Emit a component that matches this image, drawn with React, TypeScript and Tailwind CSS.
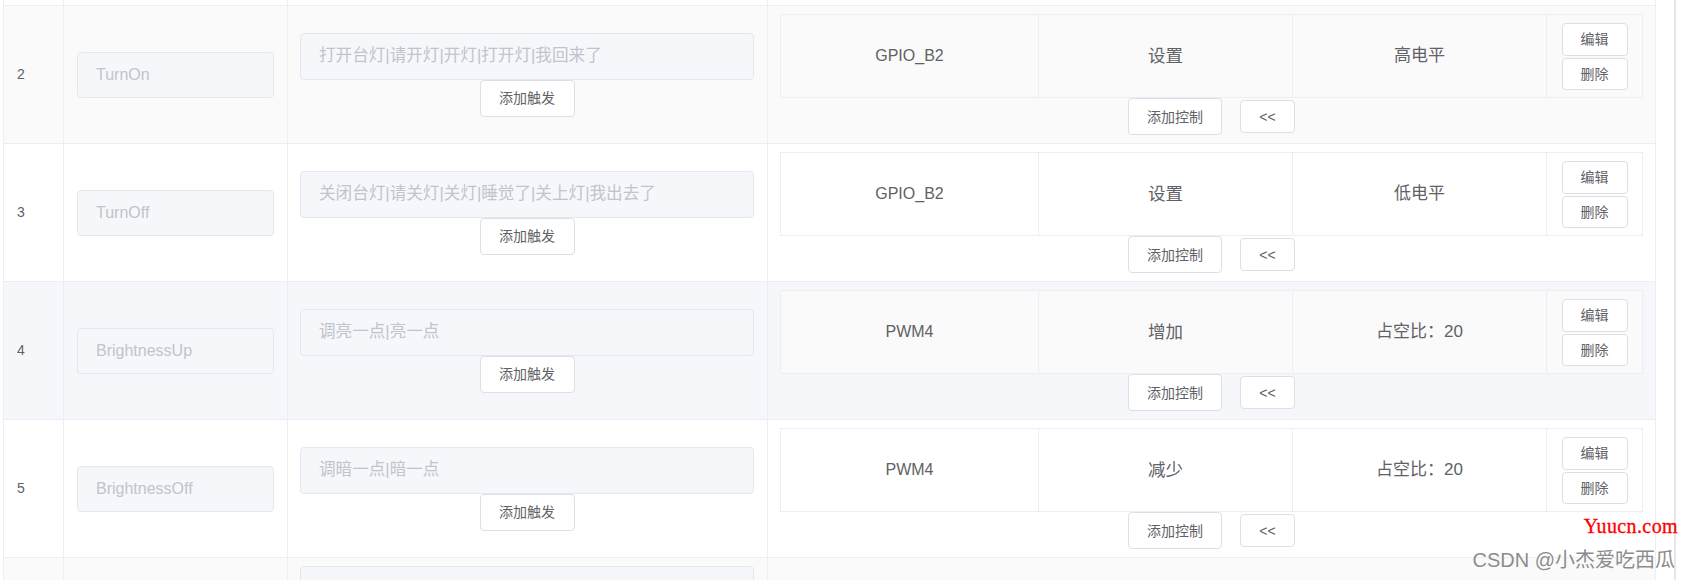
type Row = {
  no: string;
  name: string;
  trigger: string;
  pin: string;
  action: string;
  value: string;
  bg: string;
  inner: string;
};

const rows: Row[] = [
  { no: "2", name: "TurnOn", trigger: "打开台灯|请开灯|开灯|打开灯|我回来了", pin: "GPIO_B2", action: "设置", value: "高电平", bg: "bg-[#fafafa]", inner: "bg-[#fafafa]" },
  { no: "3", name: "TurnOff", trigger: "关闭台灯|请关灯|关灯|睡觉了|关上灯|我出去了", pin: "GPIO_B2", action: "设置", value: "低电平", bg: "bg-white", inner: "bg-white" },
  { no: "4", name: "BrightnessUp", trigger: "调亮一点|亮一点", pin: "PWM4", action: "增加", value: "占空比：20", bg: "bg-[#f5f7fa]", inner: "bg-[#fafafa]" },
  { no: "5", name: "BrightnessOff", trigger: "调暗一点|暗一点", pin: "PWM4", action: "减少", value: "占空比：20", bg: "bg-white", inner: "bg-white" },
];

function Btn({ children, className }: { children: React.ReactNode; className: string }) {
  return (
    <div className={`flex items-center justify-center rounded-[4px] border border-[#dcdfe6] bg-white text-[14px] leading-none text-[#606266] ${className}`}>
      {children}
    </div>
  );
}

function Input({ text, className }: { text: string; className: string }) {
  return (
    <div className={`flex items-center rounded-[4px] border border-[#e4e7ed] bg-[#f5f7fa] pl-[18px] text-[#c0c4cc] whitespace-nowrap overflow-hidden ${className}`}>
      {text}
    </div>
  );
}

function TableRow({ row }: { row: Row }) {
  return (
    <div className={`flex h-[138px] border-b border-[#ebeef5] ${row.bg}`}>
      {/* index */}
      <div className="flex w-[60px] items-center border-r border-[#ebeef5] pl-[13px] text-[14px] text-[#606266]">
        {row.no}
      </div>
      {/* name */}
      <div className="flex w-[224px] items-center border-r border-[#ebeef5] px-[13px]">
        <Input text={row.name} className="h-[46px] w-[197px] text-[16px]" />
      </div>
      {/* triggers */}
      <div className="flex w-[480px] flex-col items-center justify-center border-r border-[#ebeef5] pl-[12px] pr-[13px]">
        <Input text={row.trigger} className="h-[47px] w-full text-[16.6px]" />
        <Btn className="h-[37px] w-[95px]">添加触发</Btn>
      </div>
      {/* controls */}
      <div className="flex w-[888px] flex-col border-r border-[#ebeef5] px-[12px] pt-[8px]">
        <div className={`flex h-[84px] border border-[#ebeef5] text-[#606266] ${row.inner}`}>
          <div className="flex w-[258px] items-center justify-center border-r border-[#ebeef5] text-[16px]">{row.pin}</div>
          <div className="flex w-[254px] items-center justify-center border-r border-[#ebeef5] text-[17.5px]">{row.action}</div>
          <div className="flex w-[254px] items-center justify-center border-r border-[#ebeef5] text-[17px]">{row.value}</div>
          <div className="flex w-[95px] flex-col items-center justify-center gap-[2px]">
            <Btn className="h-[33px] w-[66px]">编辑</Btn>
            <Btn className="h-[32px] w-[66px]">删除</Btn>
          </div>
        </div>
        <div className="flex h-[37px] items-center justify-center gap-[18px]">
          <Btn className="h-[37px] w-[94px]">添加控制</Btn>
          <Btn className="h-[33px] w-[55px]">&lt;&lt;</Btn>
        </div>
      </div>
    </div>
  );
}

export default function App() {
  return (
    <div className="relative h-[580px] w-[1691px] overflow-hidden bg-white font-['Liberation_Sans','Noto_Sans_CJK_SC',sans-serif]">
      <div className="flex h-full">
        <div className="w-[3px]" />
        <div className="w-[1653px] border-l border-[#ebeef5]">
          {/* tail of the previous row */}
          <div className="flex h-[6px] border-b border-[#ebeef5] bg-white">
            <div className="w-[60px] border-r border-[#ebeef5]" />
            <div className="w-[224px] border-r border-[#ebeef5]" />
            <div className="w-[480px] border-r border-[#ebeef5]" />
            <div className="w-[888px] border-r border-[#ebeef5]" />
          </div>
          {rows.map((r) => (
            <TableRow key={r.no} row={r} />
          ))}
          {/* next row, cut off */}
          <div className="flex h-[200px] bg-[#fafafa]">
            <div className="w-[60px] border-r border-[#ebeef5]" />
            <div className="w-[224px] border-r border-[#ebeef5]" />
            <div className="w-[480px] border-r border-[#ebeef5] pl-[12px] pr-[13px] pt-[8px]">
              <Input text="" className="h-[47px] w-full" />
            </div>
            <div className="w-[888px] border-r border-[#ebeef5]" />
          </div>
        </div>
        <div className="w-[18px]" />
        <div className="w-[2px] bg-[#e6e6e6]" />
      </div>

      {/* watermarks */}
      <span className="absolute right-[13px] top-[516px] whitespace-nowrap font-['Liberation_Serif',serif] text-[20px] leading-[20px] tracking-[0.4px] text-[#ff0000] [-webkit-text-stroke:0.3px_#ff0000]">
        Yuucn.com
      </span>
      <span className="absolute right-[16px] top-[550px] whitespace-nowrap text-[20px] leading-[20px] text-[#8c8c8c] [text-shadow:0_0_1px_#ffffff]">
        CSDN @小杰爱吃西瓜
      </span>
    </div>
  );
}
